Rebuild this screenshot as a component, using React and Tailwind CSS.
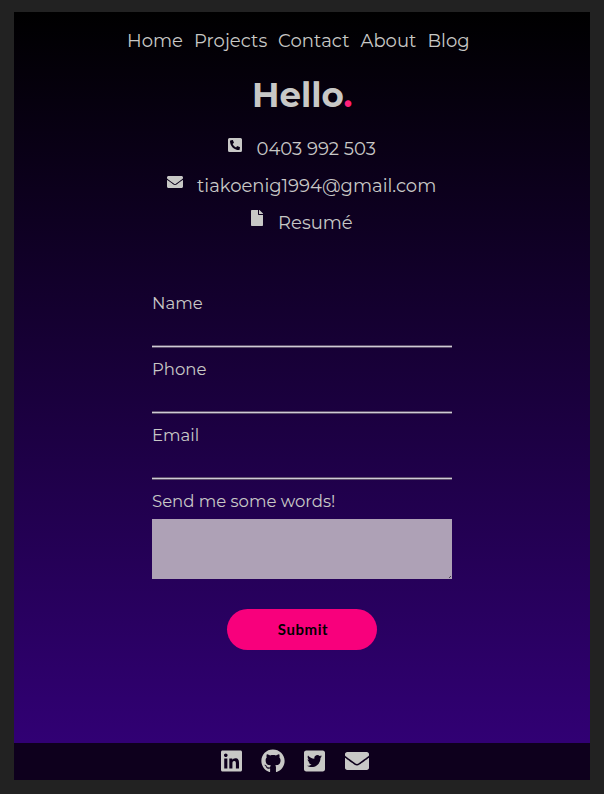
import {
  FaPhoneSquareAlt,
  FaEnvelope,
  FaFile,
  FaLinkedin,
  FaGithub,
  FaTwitterSquare,
} from "react-icons/fa";

function Field({ label }) {
  return (
    <label className="block h-[66px]">
      <span className="block h-[30px] text-[16.5px] leading-[24px]">{label}</span>
      <input
        type="text"
        className="block h-[24px] w-full bg-transparent outline-none"
      />
      <span className="block h-[3px] border-y border-[#5d4e6c] bg-[#cfcad6]" />
    </label>
  );
}

export default function App() {
  return (
    <div className="h-[794px] w-[604px] bg-[#222222] px-[14px] pt-[12px] font-['Montserrat','Inter',sans-serif] text-[#c8c8c6]">
      <div className="flex h-[768px] flex-col bg-[#0e001d]">
        <main className="flex h-[731px] flex-col bg-linear-to-b/srgb from-black to-[#310074]">
          <nav className="flex h-[58px] pt-[16px] pl-[113px] text-[18px] leading-[26px] whitespace-nowrap">
            <a className="w-[67px]">Home</a>
            <a className="w-[84px] tracking-[0.05px]">Projects</a>
            <a className="w-[82.5px] tracking-[0.1px]">Contact</a>
            <a className="w-[67px]">About</a>
            <a>Blog</a>
          </nav>
          <h1 className="h-[66px] pl-[238px] text-[34px] leading-[50px] font-bold">
            Hello<span className="text-[#ff1f78]">.</span>
          </h1>
          <div className="h-[150px] text-[18px] leading-[26px] whitespace-nowrap">
            <div className="flex h-[37px] pl-[214px]">
              <FaPhoneSquareAlt className="mt-px h-4 w-[14px]" />
              <span className="ml-[14.5px]">0403 992 503</span>
            </div>
            <div className="flex h-[37px] pl-[153px]">
              <FaEnvelope className="mt-px h-4 w-4" />
              <span className="ml-[14px]">tiakoenig1994@gmail.com</span>
            </div>
            <div className="flex h-[37px] pl-[237px]">
              <FaFile className="h-4 w-3" />
              <span className="ml-[15px]">Resumé</span>
            </div>
          </div>
          <form className="ml-[138px] w-[300px] pt-[5px]">
            <Field label="Name" />
            <Field label="Phone" />
            <Field label="Email" />
            <label className="relative block">
              <span className="block h-[30px] text-[16.5px] leading-[24px]">Send me some words!</span>
              <textarea className="block h-[60px] w-full resize-none bg-[#aea1b6] outline-none" />
              <svg className="absolute right-px bottom-px h-[2px] w-[2px]" viewBox="0 0 2 2">
                <path d="M0 1h1v1H0zM1 0h1v1H1z" fill="#4b4550" />
              </svg>
            </label>
            <button
              type="button"
              className="mt-[30px] ml-[75px] block h-[41px] w-[150px] rounded-full bg-[#f8007c] pl-[2px] font-['Lato',sans-serif] text-[15px] font-bold tracking-[0.6px] text-black"
            >
              Submit
            </button>
          </form>
        </main>
        <footer className="flex h-[37px] pt-[6px] pl-[207px]">
          <FaLinkedin className="h-6 w-[21px]" />
          <FaGithub className="ml-[19px] h-6 w-6" />
          <FaTwitterSquare className="ml-[19px] h-6 w-[21px]" />
          <FaEnvelope className="ml-5 h-6 w-6" />
        </footer>
      </div>
    </div>
  );
}
